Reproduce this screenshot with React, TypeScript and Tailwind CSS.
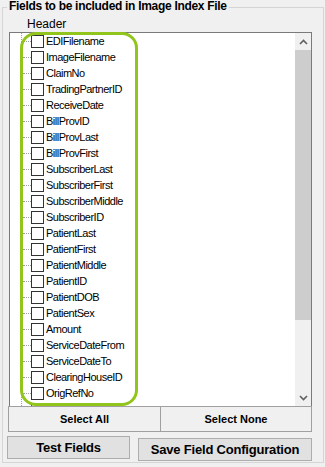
const fields = [
  'EDIFilename',
  'ImageFilename',
  'ClaimNo',
  'TradingPartnerID',
  'ReceiveDate',
  'BillProvID',
  'BillProvLast',
  'BillProvFirst',
  'SubscriberLast',
  'SubscriberFirst',
  'SubscriberMiddle',
  'SubscriberID',
  'PatientLast',
  'PatientFirst',
  'PatientMiddle',
  'PatientID',
  'PatientDOB',
  'PatientSex',
  'Amount',
  'ServiceDateFrom',
  'ServiceDateTo',
  'ClearingHouseID',
  'OrigRefNo',
];

function Chevron({ down = false }: { down?: boolean }) {
  return (
    <svg width="9" height="6" viewBox="0 0 9 6" className={down ? 'rotate-180' : ''}>
      <polyline points="1,5 4.5,1.5 8,5" fill="none" stroke="#606060" strokeWidth="1.6" />
    </svg>
  );
}

function Row({ label }: { label?: string }) {
  return (
    <div className="h-[16px] flex items-center pl-[13px]">
      <div className="w-[8px] border-t border-dotted border-[#a0a0a0]" />
      <div className="w-[13px] h-[13px] border border-[#333333] bg-white shrink-0" />
      {label && (
        <span className="ml-[2px] text-[11px] leading-[13px] tracking-[-0.5px] whitespace-nowrap">{label}</span>
      )}
    </div>
  );
}

export default function App() {
  return (
    <div
      className="relative w-[325px] h-[467px] bg-[#f0f0f0] pt-[7px] pl-[2px] text-black"
      style={{ fontFamily: '"Liberation Sans", Arial, sans-serif' }}
    >
      <div className="relative w-[322px] h-[456px] border border-[#d5d5d5]">
        <span className="absolute left-[4px] top-[-9px] px-[2px] bg-[#f0f0f0] text-[12px] font-bold leading-[14px] tracking-[-0.3px]">
          Fields to be included in Image Index File
        </span>

        <div className="h-[24px] pt-[9px] pl-[24px] text-[12px] leading-[14px]">Header</div>

        {/* tree view */}
        <div className="ml-[6px] w-[303px] h-[374px] border-t border-l border-r border-[#7a7a7a] bg-white flex">
          <div className="relative flex-1 overflow-hidden">
            <div className="absolute left-[11px] top-0 bottom-0 border-l border-dotted border-[#a0a0a0]" />
            {fields.map(f => (
              <Row key={f} label={f} />
            ))}
            <Row />
          </div>
          <div className="w-[16px] flex flex-col bg-[#f0f0f0]">
            <div className="h-[17px] flex items-center justify-center">
              <Chevron />
            </div>
            <div className="h-[270px] bg-[#cdcdcd]" />
            <div className="flex-1" />
            <div className="h-[17px] flex items-center justify-center">
              <Chevron down />
            </div>
          </div>
        </div>

        <div className="ml-[5px] w-[304px] h-[26px] border border-[#a0a0a0] flex text-[11px] font-bold">
          <button className="w-[152px] border-r border-[#a0a0a0] flex items-center justify-center">Select All</button>
          <button className="flex-1 flex items-center justify-center">Select None</button>
        </div>

        <div className="mt-[4px] ml-[4px] flex items-start text-[13px] font-bold tracking-[-0.2px]">
          <button className="w-[123px] h-[23px] bg-[#e1e1e1] border border-[#adadad] flex items-center justify-center">
            Test Fields
          </button>
          <button className="ml-[8px] mt-[2px] w-[174px] h-[23px] bg-[#e1e1e1] border border-[#adadad] flex items-center justify-center">
            Save Field Configuration
          </button>
        </div>
      </div>

      {/* highlight annotation */}
      <div className="absolute left-[20px] top-[32px] w-[118px] h-[374px] border-[3px] border-[#92c51b] rounded-[16px] pointer-events-none" />
    </div>
  );
}
